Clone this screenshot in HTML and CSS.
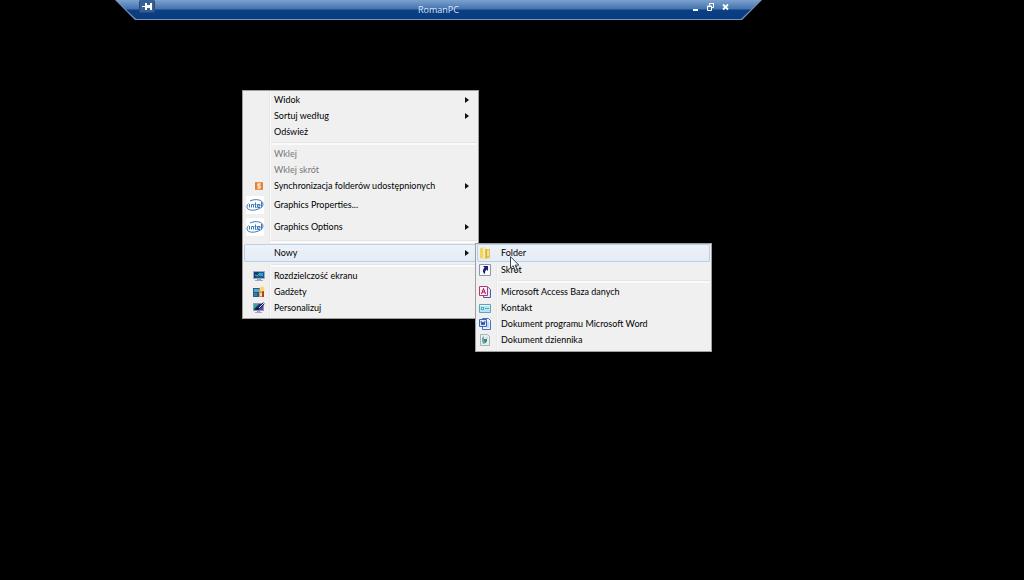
FILE: index.html
```html
<!DOCTYPE html>
<html lang="pl">
<head>
<meta charset="utf-8">
<title>RomanPC</title>
<link rel="stylesheet" href="styles.css">
</head>
<body>
<header class="bar">
  <div class="bar-face">
    <button class="tool pin" aria-label="Przypnij">
      <svg width="12" height="11" viewBox="0 0 12 11"><path d="M1 6h3v1H1zM4 3h2v2h3V3h2v7H9V8H6v2H4z" fill="#fff"/></svg>
    </button>
    <span class="bar-title">RomanPC</span>
    <span class="tools">
      <button class="tool" aria-label="Minimalizuj"><svg width="8" height="10" viewBox="0 0 8 10"><path d="M1 7h5v2H1z" fill="#fff"/></svg></button>
      <button class="tool" aria-label="Przywróć"><svg width="8" height="10" viewBox="0 0 8 10"><path d="M2.500 3.500V1.500H6.500V5.500H5M.5 4h4v4.500h-4z" fill="none" stroke="#fff"/><path d="M2 1h5v1H2zM0 4h5v1H0z" fill="#fff"/></svg></button>
      <button class="tool" aria-label="Zamknij"><svg width="8" height="10" viewBox="0 0 8 10"><path d="M1 2.500l5 5M6 2.500l-5 5" stroke="#fff" stroke-width="1.800"/></svg></button>
    </span>
  </div>
</header>
<main>
  <ul class="menu main-menu">
    <li><button class="item"><span class="icon"></span><span class="label">Widok</span><span class="arrow"></span></button></li>
    <li><button class="item"><span class="icon"></span><span class="label">Sortuj według</span><span class="arrow"></span></button></li>
    <li><button class="item"><span class="icon"></span><span class="label">Odśwież</span></button></li>
    <li class="separator"></li>
    <li><button class="item" disabled><span class="icon"></span><span class="label">Wklej</span></button></li>
    <li><button class="item" disabled><span class="icon"></span><span class="label">Wklej skrót</span></button></li>
    <li><button class="item"><span class="icon"><svg class="sync" width="8" height="8" viewBox="0 0 8 8"><path d="M0 0h8v8H0z" fill="#ec9a55"/><path d="M1 .5v7M7 .5v7" stroke="#d96a1c"/><path d="M5.500 2H3v2h2v2H2.500" fill="none" stroke="#fff"/></svg></span><span class="label">Synchronizacja folderów udostępnionych</span><span class="arrow"></span></button></li>
    <li><button class="item tall"><span class="icon"><svg width="18" height="18" viewBox="0 0 18 18"><use href="#intel"/></svg></span><span class="label">Graphics Properties...</span></button></li>
    <li><button class="item tall"><span class="icon"><svg width="18" height="18" viewBox="0 0 18 18"><g id="intel"><path d="M0 0h18v18H0z" fill="#fff"/><path d="M4 5C9 2.500 17 3.500 17 8c0 3-3 4.500-6 5.500C6 15 1 14 1 11c0-1.500.5-2.500 1.500-3.500" fill="none" stroke="#3a79ba"/><path d="M3.500 8v3.500M5.500 11.500V8.500h2v3M9.500 6.500v5h1M8.500 8.500h2M11.500 10H14V8.500h-2.500v3H14M15.500 6v5.500" fill="none" stroke="#3a79ba"/></g></svg></span><span class="label">Graphics Options</span><span class="arrow"></span></button></li>
    <li class="separator"></li>
    <li class="parent">
      <button class="item selected" aria-expanded="true"><span class="icon"></span><span class="label">Nowy</span><span class="arrow"></span></button>
      <ul class="menu sub-menu">
        <li><button class="item selected"><span class="icon"><svg width="12" height="14" viewBox="0 0 12 14"><path d="M1 2l5-1v12l-5-1z" fill="#efd568"/><path d="M4 1h3v12H4z" fill="#f9eba3"/><path d="M6 3h5v9l-5 1z" fill="#e3c55b"/><path d="M8 4h2v6H8z" fill="#f3df8e"/><path d="M7.500 3v9" stroke="#cfae43"/></svg></span><span class="label">Folder</span></button></li>
        <li><button class="item"><span class="icon"><svg width="12" height="12" viewBox="0 0 12 12"><path d="M.5.5h11v11H.5z" fill="#fafafc" stroke="#8796b5"/><path d="M4 2h5v5L7.500 5.500Q5.500 7 6 10 2 7.500 5.500 3.500z" fill="#211c74"/></svg></span><span class="label">Skrót</span></button></li>
        <li class="separator"></li>
        <li><button class="item"><span class="icon"><svg width="12" height="12" viewBox="0 0 12 12"><path d="M4.500 1.500h5l2 2v8h-7z" fill="#e6eaf8" stroke="#5058a5"/><path d="M.5.5h8v9h-8z" fill="#fcedf3" stroke="#b23a70"/><path d="M2.500 8l2-5.500L6.500 8M3 6h3" fill="none" stroke="#a31454"/></svg></span><span class="label">Microsoft Access Baza danych</span></button></li>
        <li><button class="item"><span class="icon"><svg width="12" height="12" viewBox="0 0 12 12"><path d="M.5 2.500h11v8H.5z" fill="#b9e5f2" stroke="#5aa5bd"/><path d="M1 3h10v1H1z" fill="#e6f8fd"/><path d="M2 5h3v3H2z" fill="#58a6c0"/><path d="M6 6h4v1H6z" fill="#58a6c0"/><path d="M3 6h1v1H3z" fill="#dff"/></svg></span><span class="label">Kontakt</span></button></li>
        <li><button class="item"><span class="icon"><svg width="12" height="12" viewBox="0 0 12 12"><path d="M3.500.5h6l2 2v9h-8z" fill="#eaf2ff" stroke="#4a70b8"/><path d="M9 4v6" stroke="#9ab9e5"/><path d="M.5 1.500h7v7h-7z" fill="#dce9fc" stroke="#3c67b7"/><path d="M2 3l1 4 1-3 1 3 1-4" fill="none" stroke="#204ca3"/></svg></span><span class="label">Dokument programu Microsoft Word</span></button></li>
        <li><button class="item"><span class="icon"><svg width="12" height="12" viewBox="0 0 12 12"><path d="M1.500.5h7l2 2v9h-9z" fill="#e6eeee" stroke="#a7b4b5"/><path d="M3 4l2-2v3l3 1-1 3-3 1-1-3z" fill="#69aaa6"/><path d="M5 5h3v2L6 9z" fill="#337d83"/><path d="M7 3h2v2H7z" fill="#c4dcd7"/></svg></span><span class="label">Dokument dziennika</span></button></li>
      </ul>
    </li>
    <li class="separator"></li>
    <li><button class="item"><span class="icon"><svg class="system" width="12" height="12" viewBox="0 0 12 12"><path d="M.5 1.500h11v7H.5z" fill="#1459a5" stroke="#9daab8"/><path d="M1 2h5L3 8H1z" fill="#103c80"/><path d="M6 3h4v3H6z" fill="#329dc5"/><path d="M2 5l2 1 3-3" fill="none" stroke="#65c26a"/><path d="M4 9h4v1h2v1H2v-1h2z" fill="#9fa9b3"/></svg></span><span class="label">Rozdzielczość ekranu</span></button></li>
    <li><button class="item"><span class="icon"><svg class="system" width="12" height="12" viewBox="0 0 12 12"><path d="M0 2h7v9H0z" fill="#265b8d"/><path d="M1 3h5v3H1z" fill="#62a6ca"/><path d="M1 7h3v3H1z" fill="#3283b5"/><path d="M6 4h3v7H6z" fill="#d69c43"/><path d="M9 5h2v6H9z" fill="#b53a30"/><circle cx="9" cy="3" r="2.500" fill="#f6d96e"/><path d="M7 7h2v3H7z" fill="#f0dfb2"/></svg></span><span class="label">Gadżety</span></button></li>
    <li><button class="item"><span class="icon"><svg class="system" width="12" height="12" viewBox="0 0 12 12"><path d="M.5 1.500h10v7H.5z" fill="#202b91" stroke="#8a9bb5"/><path d="M1 2h5L1 7z" fill="#2db481"/><path d="M5 8l5-4v4z" fill="#6945bc"/><path d="M3 7l3-1 5-5" fill="none" stroke="#201739" stroke-width="2"/><path d="M6 6l5-5" stroke="#e4d7ed"/><path d="M4 9h3v1h2v1H2v-1h2z" fill="#9fa9b3"/></svg></span><span class="label">Personalizuj</span></button></li>
  </ul>
  <svg class="cursor" width="10" height="16" viewBox="0 0 10 16"><path d="M.5.7v11.500l2.700-2.500 2 4.800 1.900-.8-2-4.600h3.700z" fill="#fff" stroke="#3b4254"/></svg>
</main>
</body>
</html>
```
FILE: styles.css
```css
* {
  box-sizing: border-box;
}

body {
  margin: 0;
  min-height: 100vh;
  background: #000;
  font: 9px/12px Lato, "Noto Sans", sans-serif;
}

button {
  margin: 0;
  padding: 0;
  border: 0;
  background: none;
  color: inherit;
  font: inherit;
}

.bar {
  margin: 0 262px 0 115px;
  padding-bottom: 1px;
  background: #7695ba;
  clip-path: polygon(0 0, 100% 0, calc(100% - 20px) 100%, 20px 100%);
}

.bar-face {
  display: grid;
  grid-template-columns: 1fr auto 1fr;
  align-items: start;
  height: 19px;
  padding: 0 24px;
  background: linear-gradient(#7ca2ce, #4675b0 45%, #0b3f84 55%, #093c80);
  clip-path: polygon(1px 0, calc(100% - 1px) 0, calc(100% - 21px) 100%, 21px 100%);
}

.bar-title {
  padding-top: 4px;
  color: #dce8f7;
  font-family: "Open Sans", "Noto Sans", sans-serif;
}

.tool {
  display: flex;
}

.pin {
  justify-self: start;
  padding: 0 1px 1px;
  border: 1px solid #284a7b;
  border-top: 0;
  border-radius: 2px;
  background: #365f95;
}

.tools {
  display: flex;
  justify-content: flex-end;
  gap: 7px;
  padding: 2px 8px 0 0;
}

.menu {
  position: absolute;
  width: 237px;
  margin: 0;
  padding: 1px 1px 2px;
  border: 1px solid #a0a0a0;
  background: linear-gradient(90deg, transparent 26px, #e8e8e8 26px, #e8e8e8 27px, #f8f8f8 27px, #f8f8f8 28px, transparent 28px) #f0f0f0;
  list-style: none;
}

.main-menu {
  top: 90px;
  left: 242px;
}

.parent {
  position: relative;
}

.sub-menu {
  top: -1px;
  left: 231px;
  padding: 0 1px 3px;
  background: linear-gradient(90deg, transparent 20px, #e8e8e8 20px, #e8e8e8 21px, #f8f8f8 21px, #f8f8f8 22px, transparent 22px) #f0f0f0;
}

.item {
  display: flex;
  align-items: center;
  width: 100%;
  height: 16px;
  padding-right: 8px;
  color: #000;
  text-align: left;
}

.item:disabled {
  color: #787878;
}

.tall {
  height: 22px;
}

.selected {
  height: 18px;
  border-radius: 2px;
  background: linear-gradient(#eef2f8, #e4ebf5);
  box-shadow: inset 0 0 0 1px #b8d0e8;
}

.icon {
  display: flex;
  flex: none;
  width: 30px;
  padding-left: 2px;
}

.sub-menu .icon {
  width: 24px;
}

.sync {
  margin-left: 9px;
}

.system {
  margin-left: 7px;
}

.label {
  flex: 1;
  white-space: nowrap;
}

.arrow {
  border: 3px solid transparent;
  border-right: 0;
  border-left: 4px solid #111;
}

.separator {
  height: 6px;
  margin-left: 27px;
  padding-top: 2px;
}

.sub-menu .separator {
  margin-left: 22px;
}

.separator::before {
  display: block;
  height: 2px;
  border-top: 1px solid #e4e4e4;
  background: #fafafa;
  content: "";
}

.cursor {
  position: absolute;
  top: 256px;
  left: 510px;
}
```
